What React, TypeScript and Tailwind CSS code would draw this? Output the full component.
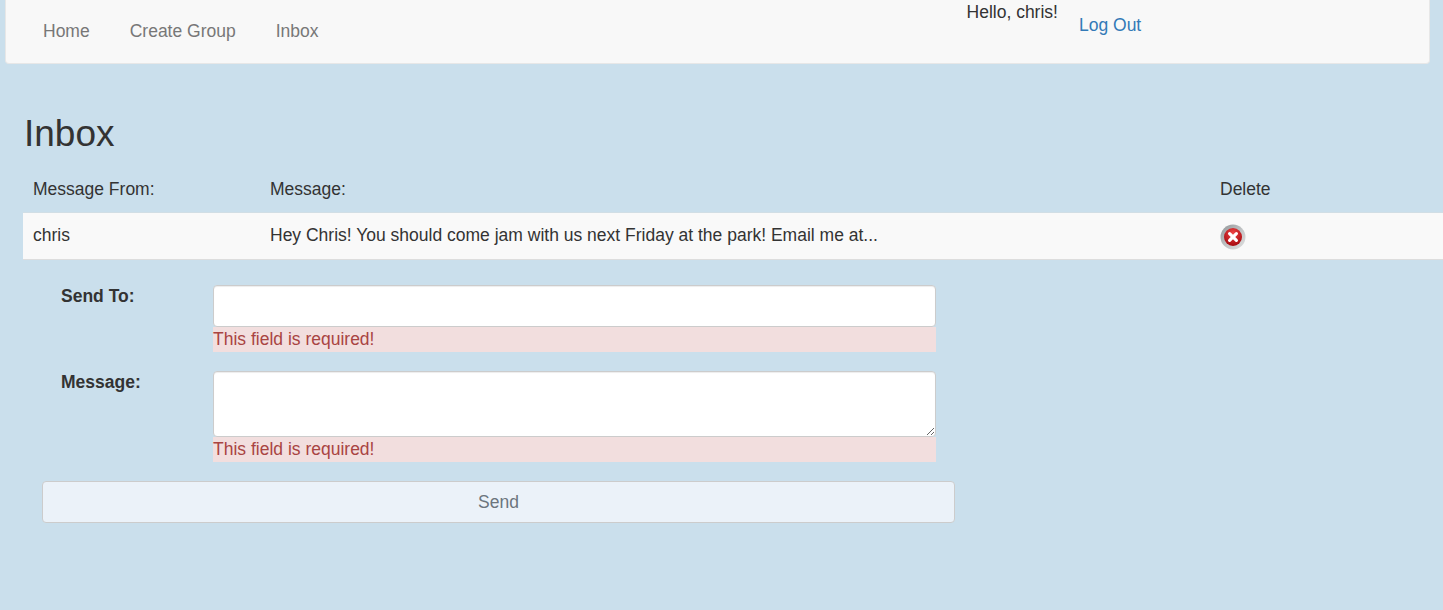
const errorText = 'This field is required!';

function DeleteIcon() {
  return (
    <svg width="26" height="26" viewBox="0 0 26 26" className="block">
      <defs>
        <radialGradient id="redBall" cx="50%" cy="30%" r="70%">
          <stop offset="0%" stopColor="#f04545" />
          <stop offset="100%" stopColor="#a5080e" />
        </radialGradient>
        <linearGradient id="ring" x1="0" y1="0" x2="1" y2="1">
          <stop offset="0%" stopColor="#8f9497" />
          <stop offset="55%" stopColor="#c4c6c7" />
          <stop offset="100%" stopColor="#dfe0e0" />
        </linearGradient>
      </defs>
      <circle cx="13" cy="13" r="12.5" fill="url(#ring)" />
      <circle cx="13" cy="13" r="9" fill="url(#redBall)" />
      <path d="M9.6 9.6 L16.4 16.4 M16.4 9.6 L9.6 16.4" stroke="#fff" strokeWidth="3.2" strokeLinecap="round" />
    </svg>
  );
}

function FieldError() {
  return (
    <div className="h-[25px] w-[723px] bg-[#f2dede] text-[#a94442] leading-[25px]">{errorText}</div>
  );
}

export default function App() {
  return (
    <div className="h-[610px] overflow-hidden bg-[#cadfec] text-[17.5px] text-[#333333] font-['Liberation_Sans',Arial,sans-serif]">
      {/* Navbar */}
      <div className="mx-[5px] w-[1425px] h-[64px] bg-[#f8f8f8] border border-t-0 border-[#e7e7e7] rounded-b-[4px] flex items-start">
        <nav className="flex pl-[17px] text-[#777777]">
          <a className="px-[20px] pt-[20px] leading-[22px]">Home</a>
          <a className="px-[20px] pt-[20px] leading-[22px]">Create Group</a>
          <a className="px-[20px] pt-[20px] leading-[22px]">Inbox</a>
        </nav>
        <div className="ml-[628px] pt-[1px] leading-[22px] text-[#333333]">Hello, chris!</div>
        <a className="ml-[21px] pt-[14px] leading-[22px] text-[#337ab7]">Log Out</a>
      </div>

      {/* Inbox table */}
      <div className="pl-[23px] pt-[48px]">
        <h1 className="text-[37px] leading-[43px] font-normal pl-px">Inbox</h1>
        <div className="mt-[12px] w-[1420px]">
          <div className="flex h-[46px] pb-[2px] items-center leading-[22px] border-b border-[#dddddd]/40">
            <div className="w-[247px] pl-[10px]">Message From:</div>
            <div className="w-[950px]">Message:</div>
            <div>Delete</div>
          </div>
          <div className="flex h-[47px] pb-[2px] items-center leading-[22px] bg-[#f9f9f9] border-b border-[#dddddd]">
            <div className="w-[247px] pl-[10px]">chris</div>
            <div className="w-[950px]">Hey Chris! You should come jam with us next Friday at the park! Email me at...</div>
            <div className="pt-[4px]"><DeleteIcon /></div>
          </div>
        </div>
      </div>

      {/* Send form */}
      <form className="pl-[42px] pt-[25px]">
        <div className="flex">
          <label className="w-[171px] pl-[19px] font-bold leading-[22px]">Send To:</label>
          <div>
            <input className="block w-[723px] h-[42px] bg-white border border-[#cccccc] rounded-[4px] shadow-[inset_0_1px_1px_rgba(0,0,0,0.075)]" />
            <FieldError />
          </div>
        </div>
        <div className="flex mt-[19px]">
          <label className="w-[171px] pl-[19px] font-bold leading-[22px]">Message:</label>
          <div>
            <textarea className="block w-[723px] h-[66px] bg-white border border-[#cccccc] rounded-[4px] shadow-[inset_0_1px_1px_rgba(0,0,0,0.075)]" />
            <FieldError />
          </div>
        </div>
        <button type="button" className="block mt-[19px] w-[913px] h-[42px] bg-[#ebf2f9] border border-[#cccccc] rounded-[4px] text-[#6c757d] text-center leading-[22px]">
          Send
        </button>
      </form>
    </div>
  );
}
